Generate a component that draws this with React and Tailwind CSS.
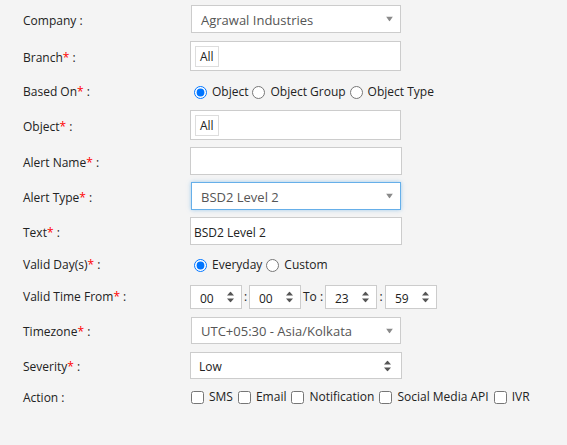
import React from 'react';

const font = { fontFamily: '"Open Sans", "Noto Sans", sans-serif' };

const Req = () => <span className="text-[#ff0000]">*</span>;

const Label = ({ text, req }) => (
    <div className="w-[167px] shrink-0 pt-[3px] text-[12px] text-[#222]">
        {text}
        {req && <Req />} :
    </div>
);

const Caret = () => (
    <svg width="7" height="5" viewBox="0 0 7 5" className="absolute right-[7px] top-1/2 -translate-y-1/2">
        <path d="M0 0 H7 L3.5 5 Z" fill="#8a8a8a" />
    </svg>
);

const Spin = ({ className = '' }) => (
    <svg width="7" height="11" viewBox="0 0 7 11" className={className}>
        <path d="M3.5 0 L7 4 H0 Z" fill="#555" />
        <path d="M0 7 H7 L3.5 11 Z" fill="#555" />
    </svg>
);

const Row = ({ label, req, h, mt, children }) => (
    <div className="flex items-center" style={{ height: h, marginTop: mt }}>
        <Label text={label} req={req} />
        {children}
    </div>
);

const Radio = ({ checked, label }) => (
    <label className="flex items-center pt-[3px] text-[12px] text-[#222] mr-[4px]">
        <input type="radio" defaultChecked={checked} name={label} className="m-0 mr-[5px] w-[13px] h-[13px]" />
        {label}
    </label>
);

const Check = ({ label }) => (
    <label className="flex items-center pt-[2px] text-[12px] text-[#222] mr-[5px]">
        <input type="checkbox" className="m-0 mr-[5px] w-[13px] h-[13px]" />
        {label}
    </label>
);

const TimeBox = ({ value }) => (
    <div className="relative w-[52px] h-full bg-white border border-[#ccc] flex items-center pt-[3px] pl-[9px] text-[12px] text-[#222]">
        {value}
        <Spin className="absolute right-[7px] top-1/2 -translate-y-1/2" />
    </div>
);

const SelectBox = ({ value, focus }) => (
    <div
        className={`relative ml-[1px] w-[210px] h-full bg-white flex items-center pt-[3px] pl-[9px] text-[13px] text-[#555] border ${
            focus ? 'border-[#66afe9] shadow-[0_0_4px_rgba(102,175,233,0.6)]' : 'border-[#ccc]'
        }`}
    >
        {value}
        <Caret />
    </div>
);

const TagBox = () => (
    <div className="w-[211px] h-full bg-white border border-[#ccc] flex items-center pl-[4px]">
        <div className="h-[21px] px-[4px] pt-[2px] border border-[#ddd] flex items-center text-[12px] text-[#222]">All</div>
    </div>
);

export default function App() {
    return (
        <div className="w-[567px] h-[445px] bg-[#f4f4f4] pl-[23px] pt-[5px]" style={font}>
            <Row label="Company" h={28} mt={0}>
                <SelectBox value="Agrawal Industries" />
            </Row>
            <Row label="Branch" req h={30} mt={8}>
                <TagBox />
            </Row>
            <Row label="Based On" req h={25} mt={7}>
                <div className="flex items-center pl-[4px]">
                    <Radio checked label="Object" />
                    <Radio label="Object Group" />
                    <Radio label="Object Type" />
                </div>
            </Row>
            <Row label="Object" req h={30} mt={7}>
                <TagBox />
            </Row>
            <Row label="Alert Name" req h={28} mt={7}>
                <div className="w-[212px] h-full bg-white border border-[#ccc]" />
            </Row>
            <Row label="Alert Type" req h={28} mt={7}>
                <SelectBox value="BSD2 Level 2" focus />
            </Row>
            <Row label="Text" req h={28} mt={7}>
                <div className="w-[212px] h-full bg-white border border-[#ccc] flex items-center pt-[3px] pl-[3px] text-[12px] text-[#222]">
                    BSD2 Level 2
                </div>
            </Row>
            <Row label="Valid Day(s)" req h={23} mt={7}>
                <div className="flex items-center pl-[4px]">
                    <Radio checked label="Everyday" />
                    <Radio label="Custom" />
                </div>
            </Row>
            <Row label="Valid Time From" req h={27} mt={7}>
                <div className="flex items-center h-full pt-[3px] text-[12px] text-[#222]">
                    <TimeBox value="00" />
                    <span className="w-[7px] text-center">:</span>
                    <TimeBox value="00" />
                    <span className="w-[24px] pl-[2px]">To :</span>
                    <TimeBox value="23" />
                    <span className="w-[8px] text-center">:</span>
                    <TimeBox value="59" />
                </div>
            </Row>
            <Row label="Timezone" req h={27} mt={8}>
                <SelectBox value="UTC+05:30 - Asia/Kolkata" />
            </Row>
            <Row label="Severity" req h={27} mt={8}>
                <div className="relative w-[212px] h-full bg-white border border-[#ccc] flex items-center pt-[3px] pl-[8px] text-[12px] text-[#222]">
                    Low
                    <Spin className="absolute right-[10px] top-1/2 -translate-y-1/2" />
                </div>
            </Row>
            <Row label="Action" h={20} mt={7}>
                <div className="flex items-center pl-[1px]">
                    <Check label="SMS" />
                    <Check label="Email" />
                    <Check label="Notification" />
                    <Check label="Social Media API" />
                    <Check label="IVR" />
                </div>
            </Row>
        </div>
    );
}
